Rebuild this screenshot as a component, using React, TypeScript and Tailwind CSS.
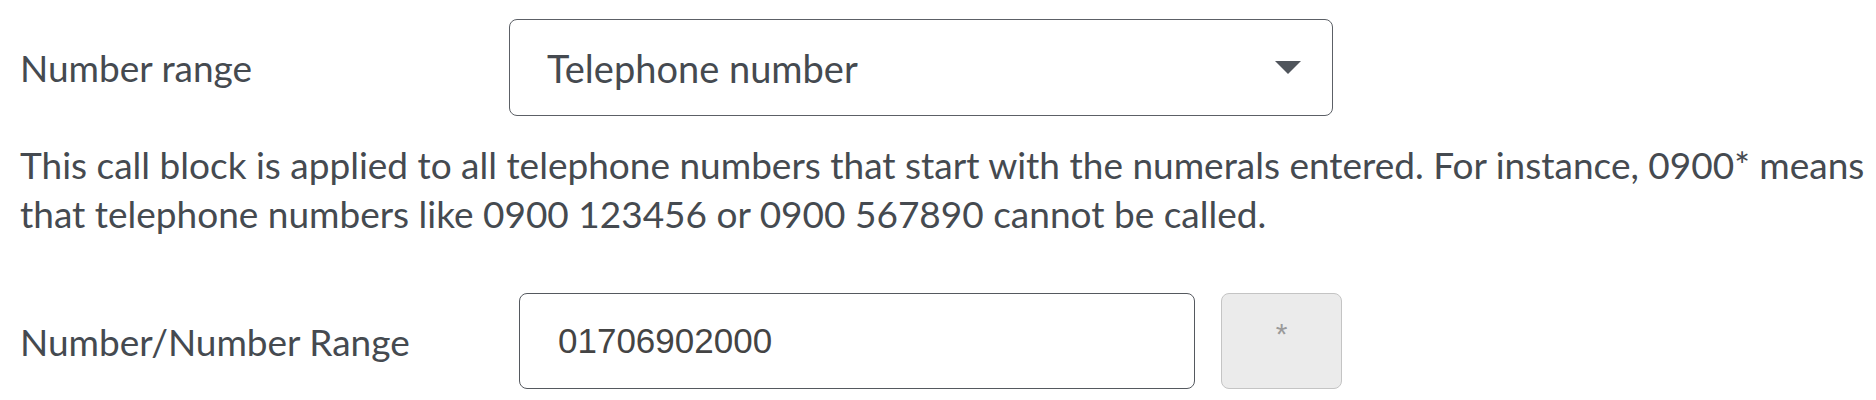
import { useState } from 'react';

const font = "font-['Lato','Noto_Sans',sans-serif]";

function Caret() {
  return (
    <svg width="26" height="13" viewBox="0 0 26 13" aria-hidden="true" className="shrink-0">
      <path d="M0 0 H26 L13 13 Z" fill="#50555c" />
    </svg>
  );
}

export default function App() {
  const [range, setRange] = useState('01706902000');

  return (
    <div className={`w-[1876px] h-[400px] overflow-hidden bg-white pl-[20px] pt-[19px] text-[#454a50] ${font}`}>
      <div className="flex items-center">
        <label className="w-[489px] shrink-0 text-[37px] leading-none">Number range</label>
        <button
          type="button"
          className="w-[824px] h-[97px] flex items-center justify-between rounded-[8px] border border-[#5c6066] bg-white pl-[37px] pr-[31px] text-left"
        >
          <span className="text-[38px] leading-none text-[#454a50]">Telephone number</span>
          <Caret />
        </button>
      </div>

      <p className="mt-[24px] text-[37px] leading-[49px] whitespace-nowrap">
        This call block is applied to all telephone numbers that start with the numerals entered. For instance, 0900* means
        <br />
        that telephone numbers like 0900 123456 or 0900 567890 cannot be called.
      </p>

      <div className="mt-[55px] flex items-center">
        <label className="w-[499px] shrink-0 text-[37px] leading-none">Number/Number Range</label>
        <input
          value={range}
          onChange={(e) => setRange(e.target.value)}
          className="w-[676px] h-[96px] rounded-[8px] border border-[#55595f] bg-white pl-[38px] text-[35px] text-[#444] font-['Liberation_Sans',Arial,sans-serif] outline-none"
        />
        <button
          type="button"
          disabled
          className="ml-[26px] w-[121px] h-[96px] rounded-[8px] border border-[#c4c4c4] bg-[#ebebeb] pb-[14px] text-[30px] leading-none text-[#9a9a9a] font-['Liberation_Sans',Arial,sans-serif]"
        >
          *
        </button>
      </div>
    </div>
  );
}
